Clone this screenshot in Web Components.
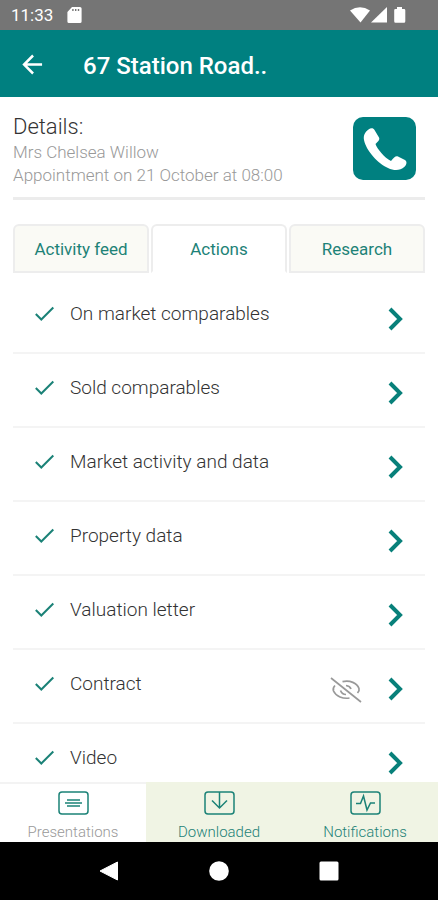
<!DOCTYPE html>
<html lang="en">
<head>
<meta charset="utf-8">
<meta name="viewport" content="width=device-width, initial-scale=1">
<title>67 Station Road</title>
<style>
  html, body { margin: 0; height: 100%; }
  body { font-family: Roboto, "Liberation Sans", sans-serif; background: #fff; color: #4a4a4a; }
</style>
</head>
<body>
<property-screen></property-screen>
<script>
const define = (name, html, setup) => {
  const template = document.createElement('template');
  template.innerHTML = '<style>*{box-sizing:border-box} button{font:inherit;color:inherit;background:none;border:0;padding:0;margin:0;cursor:pointer} svg{display:block;flex:none}</style>' + html;
  customElements.define(name, class extends HTMLElement {
    constructor() {
      super();
      this.attachShadow({ mode: 'open' }).append(template.content.cloneNode(true));
    }
    connectedCallback() { if (setup) setup(this, this.shadowRoot); }
  });
};

define('status-bar', `
  <style>
    :host { display: flex; flex: none; align-items: center; height: 30px; padding: 0 32px 0 11px; background: #757575; color: #fff; font-size: 17px; line-height: 30px; }
    .card { margin-left: 14px; }
    .signals { display: flex; margin-left: auto; }
  </style>
  <span>11:33</span>
  <svg class="card" width="15" height="18" viewBox="0 0 15 18"><path fill="#fff" fill-rule="evenodd" d="M5 1h8a1.600 1.600 0 0 1 1.600 1.600v12.800A1.600 1.600 0 0 1 13 17H2a1.600 1.600 0 0 1-1.600-1.600V6zM5.200 3v2h1.400V3zM8 3v2h1.400V3zM10.800 3v2h1.400V3z"/></svg>
  <div class="signals">
    <svg width="56" height="18" viewBox="0 0 56 18" fill="#fff"><path d="M0 4.500Q10-2 20 4.500L10.500 16.500z"/><path d="M37 1v15.500H21z"/><path d="M47 1h5v2h2q1.300 0 1.300 1.300v11q0 1.500-1.300 1.500h-8.500q-1.300 0-1.300-1.500v-11Q44.200 3 45.500 3H47z"/></svg>
  </div>
`);

define('app-bar', `
  <style>
    :host { display: flex; flex: none; align-items: center; gap: 35px; height: 67px; padding: 2px 17px 0 17px; background: #008080; color: #fff; }
    button { padding: 2px; }
    h1 { margin: 0; padding-top: 2px; font-size: 24px; line-height: 32px; font-weight: 500; white-space: nowrap; }
  </style>
  <button aria-label="Back"><svg width="27" height="27" viewBox="0 0 24 24" fill="none" stroke="#fff" stroke-width="2.200"><path d="M20.500 12H4.500M12.500 4l-8 8 8 8"/></svg></button>
  <h1><slot></slot></h1>
`);

define('contact-details', `
  <style>
    :host { display: flex; flex: none; justify-content: space-between; margin: 0 13px; padding: 15px 9px 10px 0; border-bottom: 3px solid #ececec; }
    h2 { margin: 0; color: #333; font-size: 22px; line-height: 29px; font-weight: 300; }
    p { margin: 0; color: #999; font-size: 17px; line-height: 23px; font-weight: 300; }
    button { display: grid; place-items: center; width: 63px; height: 63px; margin-top: 5px; border-radius: 10px; background: #008080; }
  </style>
  <div><h2>Details:</h2><p><slot name="person"></slot></p><p><slot name="appointment"></slot></p></div>
  <button aria-label="Call"><svg width="63" height="63" viewBox="0 0 63 63"><path fill="#fff" d="M15.500 12.500C18 10.500 20.500 11 21.500 13l4.500 7.500c1 2-.5 3.500-3.500 6.500 1.500 4.500 9 14 15.500 17 3-4 5-5.500 7-4.500l7 3.500c2.500 1.500 1.500 5-.5 6.800C47 54 41 54 35 51 25 46.500 13 33.500 11 23c-.8-4.500 1-8 4.500-10.500z"/></svg></button>
`);

define('tab-item', `
  <style>
    :host { display: block; flex: 1; min-width: 0; }
    button { width: 100%; height: 49px; border: 2px solid #ededed; border-radius: 6px 6px 0 0; background: #fafaf5; color: #1d8277; font-size: 17px; line-height: 24px; white-space: nowrap; }
    :host([selected]) button { background: #fff; border-bottom-color: #fff; }
  </style>
  <button role="tab"><slot></slot></button>
`, (host, root) => root.querySelector('button').setAttribute('aria-selected', host.hasAttribute('selected')));

define('tab-strip', `
  <style>:host { display: flex; flex: none; gap: 2px; margin: 24px 13px 7px; }</style>
  <slot></slot>
`, host => host.setAttribute('role', 'tablist'));

define('action-row', `
  <style>
    :host { display: block; border-bottom: 2px solid #f4f4f4; }
    button { display: flex; align-items: center; width: 100%; height: 72px; padding: 0 22px; text-align: left; font-size: 19px; line-height: 28px; font-weight: 300; color: #333; }
    .check { margin: 0 15px 4px 0; }
    .label { flex: 1; padding-bottom: 4px; white-space: nowrap; }
    .hidden { display: none; margin: 8px 25px 0 0; }
    :host([private]) .hidden { display: block; }
    .chevron { margin-top: 6px; }
  </style>
  <button>
    <svg class="check" width="20" height="16" viewBox="0 0 20 16" fill="none" stroke="#1b8277" stroke-width="2"><path d="M.8 8l5.500 5.500L18.300 1.500"/></svg>
    <span class="label"><slot></slot></span>
    <svg class="hidden" width="32" height="26" viewBox="0 0 32 26" fill="none" stroke="#999" stroke-width="1.700"><path d="M1 1l30 24M12.500 4.700C20 3 27 6 29 11.500q.7 2-1.500 4.500M5 8.500Q2.500 11 3.500 14C6 19.500 13 22 19.500 21M16 8.500q4 .5 5 3.500M10.500 13.500q1.500 4 5.500 4"/></svg>
    <svg class="chevron" width="16" height="24" viewBox="0 0 16 24" fill="none" stroke="#08807a" stroke-width="4"><path d="M3 2L13 12 3 22"/></svg>
  </button>
`);

define('action-list', `
  <style>:host { display: block; flex: 1 1 0; min-height: 0; overflow: hidden; margin: 0 13px; }</style>
  <slot></slot>
`);

define('nav-item', `
  <style>
    :host { display: block; flex: 1; min-width: 0; background: #f0f4e4; color: #1d8277; }
    :host([selected]) { background: #fff; color: #999; }
    a { display: flex; flex-direction: column; align-items: center; gap: 7px; height: 60px; padding-top: 7px; border-top: 2px solid #f0f4e4; color: inherit; text-decoration: none; font-size: 15px; line-height: 20px; font-weight: 300; }
    :host([selected]) a { border-color: #f3f3f3; }
  </style>
  <a href="#"><slot name="icon"></slot><span><slot></slot></span></a>
`);

define('bottom-nav', `
  <style>:host { display: flex; flex: none; }</style>
  <slot></slot>
`);

define('system-nav', `
  <style>
    :host { display: flex; flex: none; justify-content: center; align-items: center; gap: 90px; height: 58px; background: #000; }
    button { display: block; }
  </style>
  <button aria-label="Back"><svg width="20" height="20" viewBox="0 0 20 20"><path fill="#fff" stroke="#fff" stroke-linejoin="round" d="M1 10L18.500 1v18z"/></svg></button>
  <button aria-label="Home"><svg width="20" height="20" viewBox="0 0 20 20"><circle cx="10" cy="10" r="9.800" fill="#fff"/></svg></button>
  <button aria-label="Recent apps"><svg width="20" height="20" viewBox="0 0 20 20"><rect width="19" height="19" x=".5" y=".5" rx="1.500" fill="#fff"/></svg></button>
`);

const icon = inner => `<svg slot="icon" width="31" height="24" viewBox="0 0 31 24" style="display:block;flex:none" fill="none" stroke="#1b8277" stroke-width="1.500"><rect x="1" y="1" width="29" height="22" rx="3"/>${inner}</svg>`;

define('property-screen', `
  <style>:host { display: flex; flex-direction: column; height: 100vh; overflow: hidden; }</style>
  <status-bar></status-bar>
  <app-bar>67 Station Road..</app-bar>
  <contact-details>
    <span slot="person">Mrs Chelsea Willow</span>
    <span slot="appointment">Appointment on 21 October at 08:00</span>
  </contact-details>
  <tab-strip>
    <tab-item>Activity feed</tab-item>
    <tab-item selected>Actions</tab-item>
    <tab-item>Research</tab-item>
  </tab-strip>
  <action-list>
    <action-row>On market comparables</action-row>
    <action-row>Sold comparables</action-row>
    <action-row>Market activity and data</action-row>
    <action-row>Property data</action-row>
    <action-row>Valuation letter</action-row>
    <action-row private>Contract</action-row>
    <action-row>Video</action-row>
  </action-list>
  <bottom-nav>
    <nav-item selected>${icon('<path d="M9 9h13M7 12h17M9 15h13"/>')}Presentations</nav-item>
    <nav-item>${icon('<path d="M15.500 1v16M8 9.500l7.500 7.500 7.500-7.500"/>')}Downloaded</nav-item>
    <nav-item>${icon('<path d="M6 12.500h4.500l3-7.500 3.500 14 3.500-7h4.500"/>')}Notifications</nav-item>
  </bottom-nav>
  <system-nav></system-nav>
`);
</script>
</body>
</html>
